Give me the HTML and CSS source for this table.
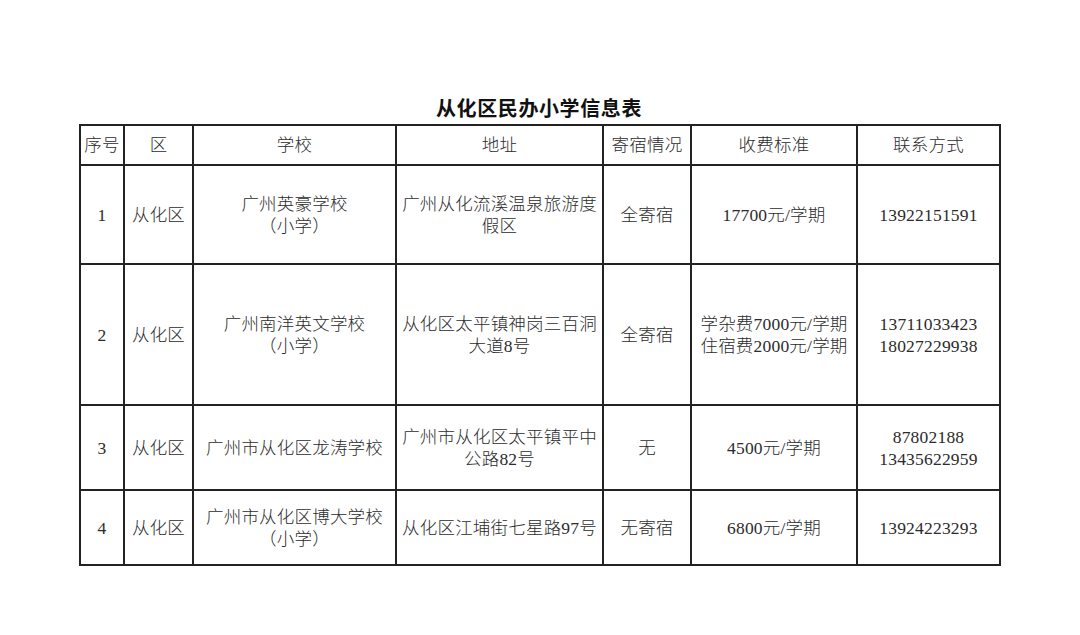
FILE: index.html
```html
<!DOCTYPE html>
<html lang="zh-CN">
<head>
<meta charset="utf-8">
<title>从化区民办小学信息表</title>
<link rel="stylesheet" href="styles.css">
</head>
<body>
<div class="page">
  <h1 class="title">从化区民办小学信息表</h1>
  <table class="info">
    <colgroup>
      <col class="c1"><col class="c2"><col class="c3"><col class="c4"><col class="c5"><col class="c6"><col class="c7">
    </colgroup>
    <thead>
      <tr class="r-head">
        <th>序号</th><th>区</th><th>学校</th><th>地址</th><th>寄宿情况</th><th>收费标准</th><th>联系方式</th>
      </tr>
    </thead>
    <tbody>
      <tr class="r1">
        <td>1</td><td>从化区</td><td>广州英豪学校<br>（小学）</td><td>广州从化流溪温泉旅游度<br>假区</td><td>全寄宿</td><td>17700元/学期</td><td>13922151591</td>
      </tr>
      <tr class="r2">
        <td>2</td><td>从化区</td><td>广州南洋英文学校<br>（小学）</td><td>从化区太平镇神岗三百洞<br>大道8号</td><td>全寄宿</td><td>学杂费7000元/学期<br>住宿费2000元/学期</td><td>13711033423<br>18027229938</td>
      </tr>
      <tr class="r3">
        <td>3</td><td>从化区</td><td>广州市从化区龙涛学校</td><td>广州市从化区太平镇平中<br>公路82号</td><td>无</td><td>4500元/学期</td><td>87802188<br>13435622959</td>
      </tr>
      <tr class="r4">
        <td>4</td><td>从化区</td><td>广州市从化区博大学校<br>（小学）</td><td>从化区江埔街七星路97号</td><td>无寄宿</td><td>6800元/学期</td><td>13924223293</td>
      </tr>
    </tbody>
  </table>
</div>
</body>
</html>
```

FILE: styles.css
```css
html, body {
  margin: 0;
  padding: 0;
  background: #ffffff;
}

.page {
  width: 920px;
  margin-left: 79px;
  padding-top: 96px;
}

.title {
  margin: 0 0 4px 0;
  font-family: "Noto Sans CJK SC", "Noto Sans", sans-serif;
  font-size: 20px;
  font-weight: 700;
  line-height: 24px;
  letter-spacing: 0.6px;
  text-align: center;
  color: #111111;
}

.info {
  width: 920px;
  table-layout: fixed;
  border-collapse: collapse;
  font-family: "Liberation Serif", "Noto Sans CJK SC", serif;
  font-size: 17.5px;
  font-weight: 300;
  letter-spacing: 0.2px;
  line-height: 22px;
  color: #2b2b2b;
}

.info th,
.info td {
  border: 2px solid #222222;
  padding: 0;
  text-align: center;
  vertical-align: middle;
  font-weight: 300;
  white-space: nowrap;
}

.c1 { width: 44px; }
.c2 { width: 69px; }
.c3 { width: 203px; }
.c4 { width: 207px; }
.c5 { width: 88px; }
.c6 { width: 166px; }
.c7 { width: 143px; }

.r-head { height: 40px; }
.r1 { height: 99px; }
.r2 { height: 141px; }
.r3 { height: 85px; }
.r4 { height: 75px; }
```
